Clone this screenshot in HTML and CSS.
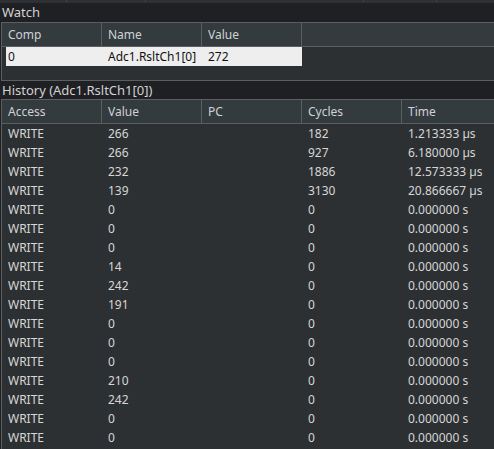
FILE: index.html
```html
<!DOCTYPE html>
<html lang="en">
<head>
  <meta charset="UTF-8">
  <title>Watch</title>
  <link rel="stylesheet" href="styles.css">
</head>
<body>
  <div class="top-strip">
    <div class="strip-cell" style="width: 67px"></div>
    <div class="strip-cell" style="width: 79px"></div>
    <div class="strip-cell" style="width: 218px"></div>
    <div class="strip-cell" style="width: 73px"></div>
    <div class="strip-cell strip-last"></div>
  </div>

  <!-- Watch -->
  <div class="panel-title">Watch</div>
  <div class="grid watch">
    <div class="grid-head">
      <div class="hcell">Comp</div>
      <div class="hcell">Name</div>
      <div class="hcell">Value</div>
      <div class="hcell hcell-fill"></div>
    </div>
    <div class="watch-body">
      <div class="watch-row selected">
        <div class="cell first">0</div>
        <div class="cell">Adc1.RsltCh1[0]</div>
        <div class="cell">272</div>
      </div>
    </div>
  </div>

  <!-- History -->
  <div class="panel-title history-title">History (Adc1.RsltCh1[0])</div>
  <div class="grid history">
    <div class="grid-head">
      <div class="hcell">Access</div>
      <div class="hcell">Value</div>
      <div class="hcell">PC</div>
      <div class="hcell">Cycles</div>
      <div class="hcell hcell-fill">Time</div>
    </div>
    <div class="history-body" id="history-body"></div>
  </div>

  <script src="app.js"></script>
</body>
</html>
```

FILE: app.js
```js
var rows = [
  ["266", "182", "1.213333 µs"],
  ["266", "927", "6.180000 µs"],
  ["232", "1886", "12.573333 µs"],
  ["139", "3130", "20.866667 µs"],
  ["0", "0", "0.000000 s"],
  ["0", "0", "0.000000 s"],
  ["0", "0", "0.000000 s"],
  ["14", "0", "0.000000 s"],
  ["242", "0", "0.000000 s"],
  ["191", "0", "0.000000 s"],
  ["0", "0", "0.000000 s"],
  ["0", "0", "0.000000 s"],
  ["0", "0", "0.000000 s"],
  ["210", "0", "0.000000 s"],
  ["242", "0", "0.000000 s"],
  ["0", "0", "0.000000 s"],
  ["0", "0", "0.000000 s"]
];

var body = document.getElementById("history-body");

rows.forEach(function (r) {
  var row = document.createElement("div");
  row.className = "history-row";
  var cells = ["WRITE", r[0], "", r[1], r[2]];
  cells.forEach(function (text) {
    var c = document.createElement("div");
    c.className = "cell";
    c.textContent = text;
    row.appendChild(c);
  });
  body.appendChild(row);
});
```

FILE: styles.css
```css
* {
  margin: 0;
  padding: 0;
  box-sizing: border-box;
}

body {
  width: 494px;
  height: 449px;
  overflow: hidden;
  background: #1f2023;
  color: #d6d6d6;
  font-family: "Noto Sans", "Open Sans", sans-serif;
  font-size: 12px;
  line-height: 19px;
}

.top-strip {
  display: flex;
  height: 3px;
  background: #2e3134;
}

.strip-cell {
  height: 2px;
  border-right: 1px solid #3f4346;
}

.strip-last {
  flex: 1;
  border-right: none;
}

.panel-title {
  height: 19px;
  padding: 0 2px;
  font-size: 13px;
  line-height: 19px;
  color: #d2d2d2;
}

.history-title {
  height: 18px;
  line-height: 18px;
}

.grid {
  margin-left: 1px;
  border-top: 1px solid #5b5f62;
  border-left: 1px solid #5b5f62;
  background: #2d3033;
}

.grid-head {
  display: grid;
  grid-template-columns: 100px 100px 100px 100px 1fr;
  height: 24px;
  background: #343b3f;
  border-bottom: 1px solid #5b5f62;
}

.watch .grid-head {
  grid-template-columns: 100px 100px 100px 1fr;
}

.hcell {
  padding-left: 6px;
  line-height: 23px;
  border-right: 1px solid #5b5f62;
  color: #cfd2d3;
  white-space: nowrap;
}

.hcell-fill {
  border-right: none;
}

.watch {
  border-bottom: 1px solid #5b5f62;
}

.watch-body {
  height: 33px;
}

.watch-row {
  display: grid;
  grid-template-columns: 96px 100px 100px;
  width: 296px;
  margin-left: 4px;
  height: 19px;
}

.selected {
  background: #eeeeee;
  color: #111111;
}

.cell {
  padding-left: 6px;
  white-space: nowrap;
}

.cell.first {
  padding-left: 2px;
}

.history {
  height: 350px;
  overflow: hidden;
}

.history-row {
  display: grid;
  grid-template-columns: 100px 100px 100px 100px 1fr;
  height: 19px;
}
```
